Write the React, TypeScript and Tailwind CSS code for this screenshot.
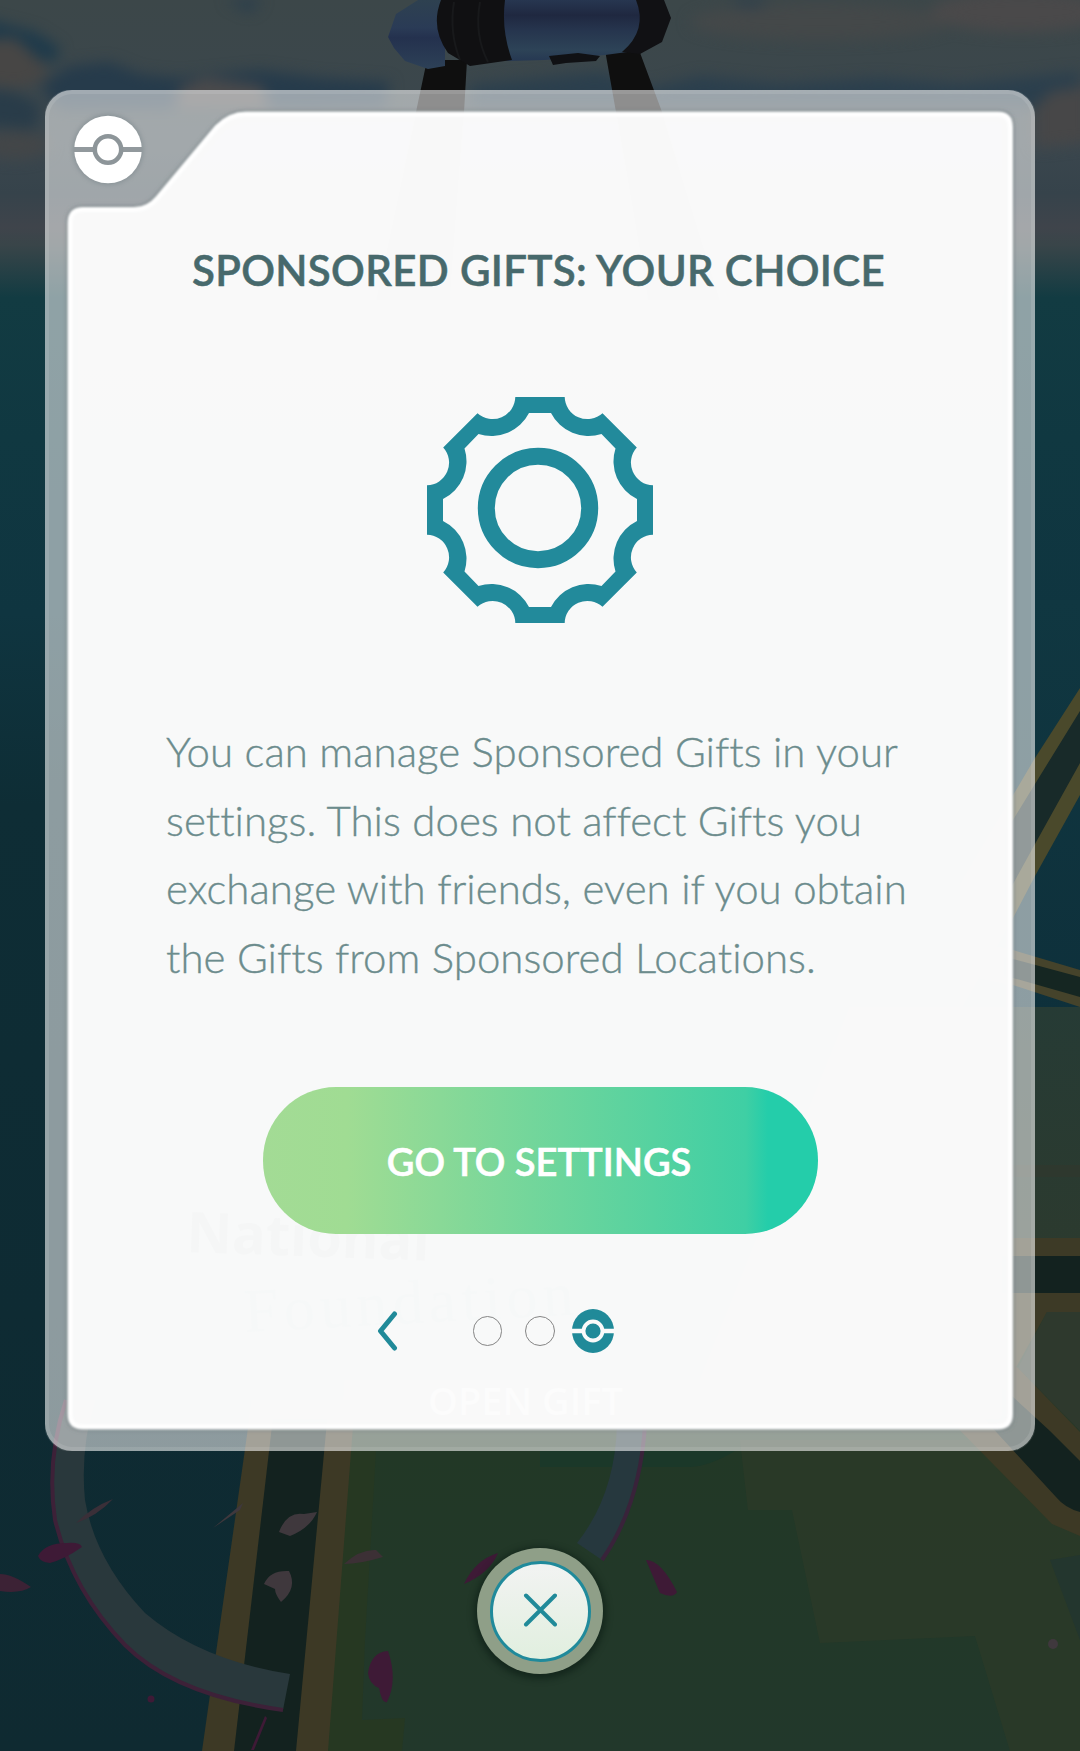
import React from "react";

const gearOuter =
  "M-24.7,-113 H24.7 A22.6 22.6 0 0 0 62.5,-96.8 L96.8,-62.5 A22.6 22.6 0 0 0 113,-24.7 V24.7 A22.6 22.6 0 0 0 96.8,62.5 L62.5,96.8 A22.6 22.6 0 0 0 24.7,113 H-24.7 A22.6 22.6 0 0 0 -62.5,96.8 L-96.8,62.5 A22.6 22.6 0 0 0 -113,24.7 V-24.7 A22.6 22.6 0 0 0 -96.8,-62.5 L-62.5,-96.8 A22.6 22.6 0 0 0 -24.7,-113 Z";
const gearInner =
  "M-11,-97 H11 A42 42 0 0 0 61.5,-76 L75.5,-61.5 A42 42 0 0 0 97,-11 V11 A42 42 0 0 0 75.5,61.5 L61.5,76 A42 42 0 0 0 11,97 H-11 A42 42 0 0 0 -61.5,76 L-75.5,61.5 A42 42 0 0 0 -97,11 V-11 A42 42 0 0 0 -75.5,-61.5 L-61.5,-76 A42 42 0 0 0 -11,-97 Z";
const facePath =
  "M38 119.5 H89 Q103 119.5 113 107.5 L172 37 Q185 24 201 24 H953 Q965.5 24 965.5 37 V1324 Q965.5 1337 953 1337 H38 Q25 1337 25 1324 V133 Q25 119.5 38 119.5 Z";

function Scene() {
  return (
    <svg className="absolute inset-0 h-full w-full" viewBox="0 0 1080 1751" preserveAspectRatio="none">
      <defs>
        <linearGradient id="sky" x1="0" y1="0" x2="0" y2="1751" gradientUnits="userSpaceOnUse">
          <stop offset="0" stopColor="#3c4749" />
          <stop offset="0.08" stopColor="#3b474e" />
          <stop offset="0.11" stopColor="#36434b" />
          <stop offset="0.13" stopColor="#3f444b" />
          <stop offset="0.14" stopColor="#394549" />
          <stop offset="0.17" stopColor="#123b42" />
          <stop offset="0.25" stopColor="#103841" />
          <stop offset="0.35" stopColor="#0f3540" />
          <stop offset="0.46" stopColor="#0e2d35" />
          <stop offset="0.75" stopColor="#0e2b33" />
          <stop offset="1" stopColor="#0f2a31" />
        </linearGradient>
        <linearGradient id="sea" x1="0" y1="0" x2="0" y2="1">
          <stop offset="0" stopColor="#103741" />
          <stop offset="1" stopColor="#0e303b" />
        </linearGradient>
        <linearGradient id="grass" x1="0" y1="0" x2="0" y2="1">
          <stop offset="0" stopColor="#263b35" />
          <stop offset="0.35" stopColor="#2c3a2e" />
          <stop offset="0.6" stopColor="#223826" />
          <stop offset="1" stopColor="#22382b" />
        </linearGradient>
        <linearGradient id="steel" x1="0" y1="0" x2="0" y2="1">
          <stop offset="0" stopColor="#273650" />
          <stop offset="0.25" stopColor="#1f2840" />
          <stop offset="0.5" stopColor="#26354e" />
          <stop offset="0.82" stopColor="#2d4357" />
          <stop offset="1" stopColor="#263852" />
        </linearGradient>
        <linearGradient id="steelTip" x1="0" y1="0" x2="0" y2="1">
          <stop offset="0" stopColor="#2e4150" />
          <stop offset="0.4" stopColor="#2a3b56" />
          <stop offset="0.55" stopColor="#24314e" />
          <stop offset="1" stopColor="#2d4157" />
        </linearGradient>
        <filter id="cloud" x="-30%" y="-80%" width="160%" height="260%" colorInterpolationFilters="sRGB">
          <feGaussianBlur stdDeviation="7" />
        </filter>
      </defs>
      <rect width="1080" height="1751" fill="url(#sky)" />
      <rect x="900" y="600" width="180" height="420" fill="url(#sea)" />
      <g filter="url(#cloud)">
        <path d="M-20 18 L35 32 L60 48 L55 62 L20 58 L-20 40 Z" fill="#1e3a4b" />
        <path d="M40 85 L70 66 L110 62 L140 74 L180 78 L260 70 L320 78 L390 82 L385 108 L60 110 Z" fill="#263b4b" />
        <path d="M-20 88 L15 92 L40 105 L35 130 L-20 125 Z" fill="#293c49" />
        <path d="M470 85 L600 72 L650 88 L700 76 L780 84 L880 78 L960 84 L1080 72 V98 L1040 108 H470 Z" fill="#2b3f4d" />
        <path d="M225 0 H262 L250 12 Z M728 0 H768 L755 12 Z" fill="#283d4d" />
        <path d="M-20 40 L15 38 L42 62 L48 78 L20 88 L-20 84 Z" fill="#474645" />
        <path d="M180 88 L205 78 L235 82 L262 86 L270 108 L175 108 Z" fill="#4b4a4b" />
        <ellipse cx="820" cy="22" rx="130" ry="18" fill="#444849" />
        <ellipse cx="1020" cy="12" rx="90" ry="20" fill="#4a494a" />
        <path d="M1090 85 L1050 92 L1035 108 L1035 148 L1090 142 Z" fill="#474748" />
        <ellipse cx="15" cy="145" rx="35" ry="14" fill="#434648" />
      </g>
      <path d="M427 60 H467 L464 112 L450 300 H376 L416 112 Z" fill="#0f0f0f" />
      <path d="M605 50 H639 L662 112 L720 300 H648 L616 112 Z" fill="#0f0f0f" />
      <path d="M418 0 H445 V66 L428 69 L405 61 L394 48 L388 37 L396 14 Z" fill="url(#steelTip)" />
      <path d="M500 0 H642 V50 L605 55 L545 60 L506 61 Z" fill="url(#steel)" />
      <path d="M441 0 H505 Q501 30 512 60 L470 66 L448 53 Q430 28 441 0 Z" fill="#101012" />
      <path d="M454 2 Q449 32 460 60 M480 2 Q474 35 488 62" fill="none" stroke="#18191b" strokeWidth="2" />
      <path d="M636 0 H664 L671 18 L662 42 L640 54 L622 52 Q648 30 636 0 Z" fill="#111114" />
      <path d="M549 56 L578 53 L600 56 L596 61 L566 63 L553 65 Z" fill="#101114" />

      <path d="M1080 1007 H850 L700 1380 H345 L340 1451 L326 1751 H1080 Z" fill="url(#grass)" />
      <path d="M740 1440 L748 1510 L792 1510 L820 1643 L975 1636 L1010 1751 H1080 V1440 Z" fill="#2c3928" opacity=".8" />
      <path d="M1050 1560 L1080 1640 V1555 Z" fill="#23362e" />
      <path d="M345 1451 H376 L365 1640 L362 1720 L405 1718 L402 1751 H325 Z" fill="#263822" />
      <path d="M540 1451 H735 Q710 1466 690 1467 H540 Z" fill="#1b3829" />

      <path d="M1080 688 L1035 758 L960 885 L960 1010 L1013 918 L1035 876 L1080 795 Z" fill="#4a492b" />
      <path d="M1080 711 L1035 784 L970 890 V960 L1013 884 L1035 844 L1080 763 Z" fill="#182a29" />
      <path d="M980 944 L1013 950 L1080 970 V1007 L1013 985 L980 978 Z" fill="#45432b" />
      <path d="M980 952 L1013 959 L1080 977 V997 L1013 978 L980 970 Z" fill="#152622" />
      <path d="M1080 1165 H1000 V1177 H1080 Z" fill="#2e382e" />
      <path d="M1080 1238 H960 V1345 L1005 1420 L1080 1461 L1013 1373 L1047 1312 H1080 Z" fill="#3d3a26" />
      <path d="M1080 1256 H960 V1293 H1080 Z" fill="#13221f" />
      <path d="M1047 1312 H1080 V1431 L1018 1368 Z" fill="#2e392d" />
      <path d="M970 1340 L1018 1368 L1080 1432 V1536 L1052 1524 L940 1410 Z" fill="#3d3925" />
      <path d="M1000 1385 L1050 1431 L1080 1461 V1512 Q1065 1508 1056 1497 L976 1410 Z" fill="#13221f" />

      <path d="M252 1400 H355 L328 1751 H202 Z" fill="#3d3925" />
      <path d="M275 1400 H329 L296 1751 H234 Z" fill="#13221f" />

      <path d="M66 1400 Q46 1460 55 1520 Q72 1590 125 1645 Q175 1695 283 1710 L290 1674 Q200 1660 145 1613 Q95 1560 85 1500 Q80 1450 95 1400 Z" fill="#29383c" />
      <path d="M66 1400 Q46 1460 55 1520 Q72 1590 125 1645 Q175 1695 283 1710" fill="none" stroke="#3d2138" strokeWidth="4" />
      <path d="M617 1425 Q615 1495 577 1543 L602 1560 Q638 1510 645 1425 Z" fill="#26383e" />
      <path d="M645 1425 Q640 1505 602 1560" fill="none" stroke="#39233a" strokeWidth="4" />

      <g fill="#3e1a36">
        <path d="M38 1556 Q45 1543 67 1543 Q80 1542 82 1547 Q65 1559 50 1563 Q40 1562 38 1556 Z" />
        <path d="M0 1574 Q12 1574 31 1587 Q20 1594 0 1591 Z" fill="#3c2235" />
        <path d="M464 1584 Q475 1560 498 1553 Q490 1573 464 1584 Z" />
        <path d="M646 1560 Q661 1560 677 1592 Q673 1599 660 1593 Z" />
        <path d="M368 1673 Q371 1652 388 1651 Q398 1680 387 1702 Q382 1704 379 1688 Q369 1684 368 1673 Z" />
        <circle cx="151" cy="1699" r="3.5" />
        <path d="M265 1716 L267 1718 L254 1750 H251 Z" />
      </g>
      <g fill="#3f383d">
        <path d="M279 1532 Q287 1511 304 1514 L317 1512 Q310 1528 290 1536 Z" />
        <path d="M264 1584 Q270 1570 289 1571 Q298 1588 281 1602 Q275 1594 275 1589 Z" />
        <path d="M344 1564 Q360 1549 376 1550 L383 1557 Q360 1564 344 1564 Z" fill="#3c3035" />
        <path d="M76 1523 Q92 1507 113 1499 Q97 1516 76 1523 Z" fill="#3a2f38" />
        <path d="M213 1528 L243 1503 L240 1510 Z" />
        <circle cx="1053" cy="1644" r="5" />
      </g>
    </svg>
  );
}

function CardFrame() {
  return (
    <svg className="absolute inset-0 h-full w-full" viewBox="0 0 990 1361">
      <defs>
        <filter id="edge" x="-5%" y="-5%" width="110%" height="110%">
          <feGaussianBlur stdDeviation="2" />
        </filter>
        <filter id="glow" x="-5%" y="-5%" width="110%" height="110%">
          <feGaussianBlur stdDeviation="1.2" />
        </filter>
      </defs>
      <rect width="990" height="1361" rx="27" fill="#fff" fillOpacity=".53" />
      <rect x="1.5" y="1.5" width="987" height="1358" rx="26" fill="none" stroke="#fff" strokeOpacity=".1" strokeWidth="5" />
      <path d={facePath} fill="none" stroke="#5f6d72" strokeOpacity=".7" strokeWidth="6" filter="url(#edge)" />
      <path d={facePath} fill="#fcfcfc" fillOpacity=".968" />
      <path d={facePath} fill="none" stroke="#fff" strokeWidth="5" filter="url(#glow)" />
      <circle cx="63" cy="59.5" r="35.5" fill="#7c878c" opacity=".6" filter="url(#edge)" />
      <circle cx="63" cy="59.5" r="33.8" fill="#fff" />
      <path d="M29 59.5 H97" stroke="#92999d" strokeWidth="5" />
      <circle cx="63" cy="59.5" r="13.2" fill="#fff" stroke="#8d9599" strokeWidth="4.5" />
      <g fontFamily="Open Sans, sans-serif">
        <text x="141" y="1162" fontSize="56" fontWeight="700" fill="#f5f6f6" transform="rotate(2 141 1162)">National</text>
        <text x="200" y="1242" fontSize="62" fontFamily="Liberation Serif, serif" fill="#f6f8f8" transform="rotate(-3 200 1242)" textLength="330">Foundation</text>
        <text x="383" y="1325" fontSize="38" fontWeight="600" fill="#fcfcfc">OPEN GIFT</text>
      </g>
    </svg>
  );
}

export default function App() {
  return (
    <main className="relative flex h-[1751px] w-[1080px] flex-col items-center overflow-hidden pt-[90px] font-[Lato,sans-serif] [font-variant-ligatures:none]">
      <Scene />
      <section className="relative flex h-[1361px] w-[990px] shrink-0 flex-col items-center">
        <CardFrame />
        <h1 className="relative mt-[151px] mr-[3px] whitespace-nowrap text-[42px] leading-[58px] font-semibold tracking-[0.35px] text-[#47696c] [-webkit-text-stroke:0.5px_#47696c]">
          SPONSORED GIFTS: YOUR CHOICE
        </h1>
        <svg className="relative mt-[98px] h-[226px] w-[226px] shrink-0" viewBox="-113 -113 226 226">
          <path d={gearOuter + " " + gearInner} fill="#228a9b" fillRule="evenodd" />
          <circle cx="-2" cy="-2" r="51.7" fill="none" stroke="#228a9b" strokeWidth="17" />
        </svg>
        <p className="relative mt-[94px] ml-[121px] w-[750px] self-start whitespace-nowrap text-[42px] leading-[68.7px] font-light tracking-[0.03px] text-[#6c8c8d] [-webkit-text-stroke:0.35px_#6c8c8d]">
          You can manage Sponsored Gifts in your<br />
          settings. This does not affect Gifts you<br />
          exchange with friends, even if you obtain<br />
          the Gifts from Sponsored Locations.
        </p>
        <button className="relative mt-[95px] flex h-[147px] w-[555px] shrink-0 items-center justify-center rounded-[73px] bg-[linear-gradient(90deg,#a3db95_0%,#a0dc93_15%,#3fcfa4_87%,#24cdaa_91%,#24cdaa_100%)] pt-[3px] pr-[2px] text-[38px] font-semibold whitespace-nowrap text-white [-webkit-text-stroke:0.6px_white]">
          GO TO SETTINGS
        </button>
        <nav className="relative mt-[74px] ml-[332px] flex h-[46px] w-[240px] items-center self-start">
          <svg className="h-[41px] w-[22px]" viewBox="0 0 22 41" fill="none" stroke="#208a99" strokeWidth="5" strokeLinecap="round" strokeLinejoin="round">
            <path d="M17.5 4 L3.5 21 L17.5 38" />
          </svg>
          <span className="mt-px ml-[74px] h-[30px] w-[29px] rounded-full border-[1.5px] border-[#858585]" />
          <span className="mt-px ml-[23px] h-[30px] w-[30px] rounded-full border-[1.5px] border-[#858585]" />
          <svg className="ml-[17px] h-[44px] w-[42px]" viewBox="-21 -22 42 44">
            <ellipse rx="21" ry="22" fill="#208a99" />
            <path d="M-22 0 H22" stroke="#fafafa" strokeWidth="4.5" />
            <circle r="9.5" fill="#208a99" stroke="#fafafa" strokeWidth="3.8" />
          </svg>
        </nav>
      </section>
      <button className="relative mt-[97px] flex h-[126px] w-[126px] shrink-0 items-center justify-center rounded-full bg-[#8f9f88] shadow-[0_2px_6px_3px_rgba(10,25,18,0.55)]">
        <span className="flex h-[101px] w-[101px] items-center justify-center rounded-full border-[3px] border-[#208a9b] bg-linear-to-b from-[#f2f3f2] to-[#e1efdf]">
          <svg className="mb-[2px] h-[34px] w-[34px]" viewBox="0 0 34 34" stroke="#208a99" strokeWidth="4" strokeLinecap="round">
            <path d="M3 2.5 L32 31.5 M32 2.5 L3 31.5" />
          </svg>
        </span>
      </button>
    </main>
  );
}
